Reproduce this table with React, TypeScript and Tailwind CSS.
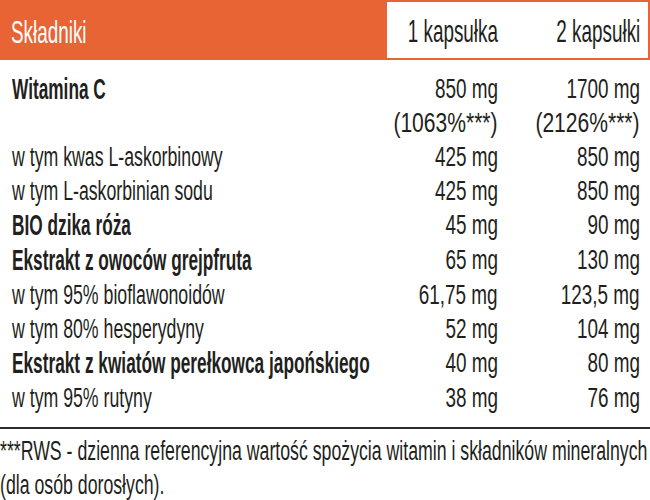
import React from "react";

type Row = {
  name: string;
  bold?: boolean;
  one: string;
  two: string;
  oneExtra?: string;
  twoExtra?: string;
};

const rows: Row[] = [
  { name: "Witamina C", bold: true, one: "850 mg", two: "1700 mg", oneExtra: "(1063%***)", twoExtra: "(2126%***)" },
  { name: "w tym kwas L-askorbinowy", one: "425 mg", two: "850 mg" },
  { name: "w tym L-askorbinian sodu", one: "425 mg", two: "850 mg" },
  { name: "BIO dzika róża", bold: true, one: "45 mg", two: "90 mg" },
  { name: "Ekstrakt z owoców grejpfruta", bold: true, one: "65 mg", two: "130 mg" },
  { name: "w tym 95% bioflawonoidów", one: "61,75 mg", two: "123,5 mg" },
  { name: "w tym 80% hesperydyny", one: "52 mg", two: "104 mg" },
  { name: "Ekstrakt z kwiatów perełkowca japońskiego", bold: true, one: "40 mg", two: "80 mg" },
  { name: "w tym 95% rutyny", one: "38 mg", two: "76 mg" },
];

// no condensed face is installed, so Liberation Sans is squeezed horizontally
const font = "font-['Liberation_Sans',Arial,sans-serif]";

const Value = ({ children, wide }: { children: React.ReactNode; wide?: boolean }) => (
  <div className="flex justify-end whitespace-nowrap">
    <span className={`shrink-0 inline-block origin-right ${wide ? "scale-x-[0.78]" : "scale-x-[0.7]"}`}>{children}</span>
  </div>
);

export default function App() {
  return (
    <div className={`w-[650px] h-[500px] bg-white text-[#231f20] overflow-hidden ${font}`}>
      {/* Header */}
      <div className="flex h-[60px] text-[32px]">
        <div className="w-[385px] bg-[#e96434] text-white pl-[11px] pt-[4px] leading-[56px] whitespace-nowrap">
          <span className="inline-block origin-left scale-x-[0.59]">Składniki</span>
        </div>
        <div className="flex-1 border-2 border-[#e96434] grid grid-cols-[111px_1fr] pr-[8px] pt-[2px] leading-[54px]">
          <div className="flex justify-end whitespace-nowrap">
            <span className="shrink-0 inline-block origin-right scale-x-[0.59]">1 kapsułka</span>
          </div>
          <div className="flex justify-end whitespace-nowrap">
            <span className="shrink-0 inline-block origin-right scale-x-[0.59]">2 kapsułki</span>
          </div>
        </div>
      </div>

      {/* Body */}
      <div className="pt-[12px] pl-[12px] pr-[10px] text-[27px] leading-[34px]">
        {rows.map((r) => (
          <div key={r.name} className="grid grid-cols-[1fr_140px_142px]">
            <div className="whitespace-nowrap min-w-0">
              {r.bold ? (
                <span className="inline-block origin-left scale-x-[0.595] font-bold text-[29px]">{r.name}</span>
              ) : (
                <span className="inline-block origin-left scale-x-[0.656]">{r.name}</span>
              )}
            </div>
            <div>
              <Value>{r.one}</Value>
              {r.oneExtra && <Value wide>{r.oneExtra}</Value>}
            </div>
            <div>
              <Value>{r.two}</Value>
              {r.twoExtra && <Value wide>{r.twoExtra}</Value>}
            </div>
          </div>
        ))}
      </div>

      {/* Footnote */}
      <div className="mt-[12px] border-t-2 border-[#2b2b2b] pt-[5px] text-[27px] leading-[34px] whitespace-nowrap">
        <div>
          <span className="inline-block origin-left scale-x-[0.656]">***RWS - dzienna referencyjna wartość spożycia witamin i składników mineralnych</span>
        </div>
        <div>
          <span className="inline-block origin-left scale-x-[0.656]">(dla osób dorosłych).</span>
        </div>
      </div>
    </div>
  );
}
